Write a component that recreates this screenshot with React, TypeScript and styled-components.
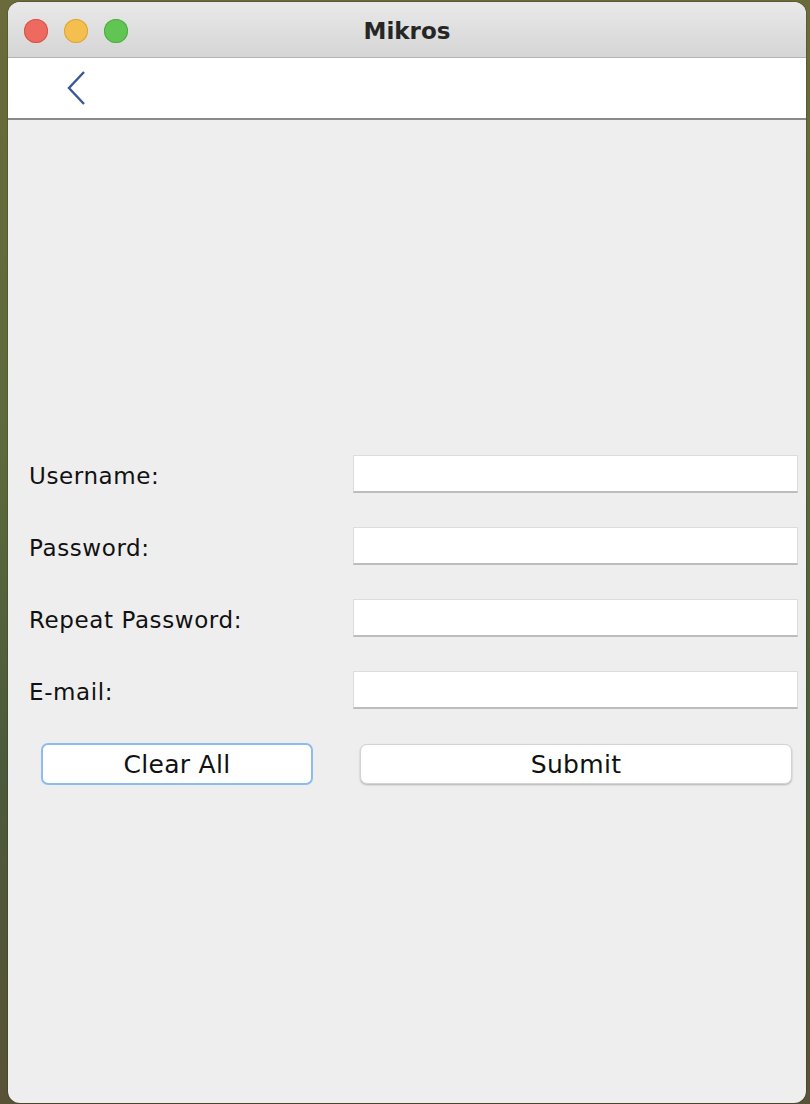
import React from "react";
import styled, { createGlobalStyle } from "styled-components";

const GlobalStyle = createGlobalStyle`
  html, body {
    margin: 0;
    padding: 0;
  }
  body {
    background: linear-gradient(180deg, #6b6a3a 0%, #5d6a3c 40%, #4b5a3a 70%, #5a5236 100%);
    font-family: "DejaVu Sans", "Liberation Sans", sans-serif;
  }
`;

const Desktop = styled.div`
  width: 810px;
  height: 1104px;
  padding: 2px 4px 1px 8px;
  box-sizing: border-box;
`;

const Window = styled.div`
  height: 100%;
  display: flex;
  flex-direction: column;
  background: #eeeeee;
  border-radius: 12px;
  overflow: hidden;
  box-shadow: 0 0 0 1px rgba(0, 0, 0, 0.15);
`;

const TitleBar = styled.div`
  position: relative;
  height: 56px;
  flex-shrink: 0;
  display: flex;
  align-items: center;
  justify-content: center;
  padding-top: 3px;
  box-sizing: border-box;
  background: linear-gradient(180deg, #e9e9e9 0%, #d5d5d5 100%);
  border-bottom: 1px solid #b4b4b4;
`;

const Lights = styled.div`
  position: absolute;
  left: 16px;
  top: 17px;
  display: flex;
  gap: 16px;
`;

const Light = styled.span<{ $fill: string; $edge: string }>`
  width: 24px;
  height: 24px;
  border-radius: 50%;
  background: ${(p) => p.$fill};
  box-shadow: inset 0 0 0 1px ${(p) => p.$edge};
`;

const Title = styled.h1`
  margin: 0;
  font-family: "DejaVu Sans", "Liberation Sans", sans-serif;
  font-weight: 700;
  font-size: 23px;
  color: #262626;
`;

const Toolbar = styled.div`
  height: 60px;
  flex-shrink: 0;
  display: flex;
  align-items: center;
  padding-left: 58px;
  background: #ffffff;
  border-bottom: 2px solid #8a8a8a;
`;

const BackButton = styled.button`
  border: none;
  background: none;
  padding: 0;
  display: flex;
  cursor: pointer;
`;

const Content = styled.div`
  flex: 1;
  padding: 335px 8px 0 21px;
`;

const Form = styled.form`
  display: grid;
  grid-template-columns: 324px 1fr;
  row-gap: 34px;
  align-items: center;
`;

const Label = styled.label`
  font-size: 23px;
  letter-spacing: 0.6px;
  color: #111;
  padding-top: 4px;
`;

const Field = styled.input`
  height: 38px;
  box-sizing: border-box;
  border: 1px solid #dcdcdc;
  border-bottom: 2px solid #bdbdbd;
  background: #fff;
  outline: none;
`;

const Actions = styled.div`
  display: flex;
  align-items: center;
  margin-top: 34px;
  padding-left: 12px;
`;

const Button = styled.button<{ $focused?: boolean; $width: number }>`
  width: ${(p) => p.$width}px;
  height: ${(p) => (p.$focused ? 42 : 40)}px;
  margin-left: ${(p) => (p.$focused ? 0 : 47)}px;
  padding: 0;
  background: #fff;
  border-radius: 7px;
  font-family: "DejaVu Sans", sans-serif;
  font-size: 25px;
  letter-spacing: 0.3px;
  color: #111;
  cursor: pointer;
  border: ${(p) => (p.$focused ? "2px solid #8dbbf2" : "1px solid #d4d4d4")};
  box-shadow: ${(p) => (p.$focused ? "none" : "0 1px 2px rgba(0,0,0,0.25)")};
`;

function App() {
  const fields = ["Username:", "Password:", "Repeat Password:", "E-mail:"];
  return (
    <Desktop>
      <GlobalStyle />
      <Window>
        <TitleBar>
          <Lights>
            <Light $fill="#ee6a5e" $edge="#d65548" />
            <Light $fill="#f5bf4f" $edge="#dca53a" />
            <Light $fill="#61c554" $edge="#4ead43" />
          </Lights>
          <Title>Mikros</Title>
        </TitleBar>
        <Toolbar>
          <BackButton>
            <svg width="20" height="36" viewBox="0 0 20 36">
              <polyline
                points="18,2 3,18 18,34"
                fill="none"
                stroke="#3b5997"
                strokeWidth="2.4"
              />
            </svg>
          </BackButton>
        </Toolbar>
        <Content>
          <Form>
            {fields.map((f) => (
              <React.Fragment key={f}>
                <Label>{f}</Label>
                <Field type={f.includes("Password") ? "password" : "text"} />
              </React.Fragment>
            ))}
          </Form>
          <Actions>
            <Button type="button" $focused $width={272}>
              Clear All
            </Button>
            <Button type="button" $width={432}>
              Submit
            </Button>
          </Actions>
        </Content>
      </Window>
    </Desktop>
  );
}

export default App;
